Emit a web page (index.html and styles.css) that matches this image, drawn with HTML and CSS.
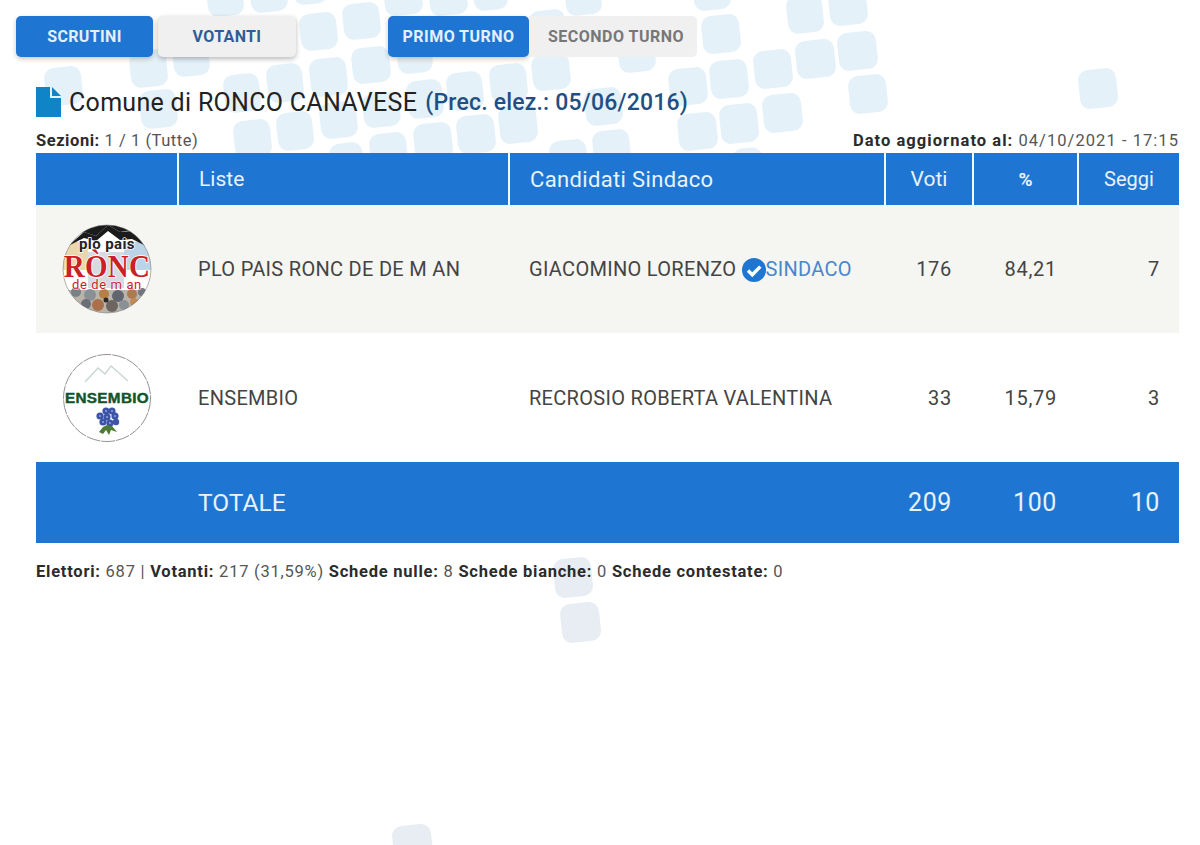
FILE: index.html
```html
<!DOCTYPE html>
<html lang="it">
<head>
<meta charset="utf-8">
<title>Comune di RONCO CANAVESE</title>
<link rel="stylesheet" href="styles.css">
</head>
<body>
<svg class="tiles tiles-blue" width="1200" height="845" viewBox="0 0 1200 845" aria-hidden="true">
  <g class="tile-top">
    <rect x="207" y="-20" width="36" height="36" rx="10" transform="rotate(-6 225 -2)"/>
    <rect x="250" y="-25" width="37" height="37" rx="10" transform="rotate(-6 268 -7)"/>
    <rect x="293" y="-30" width="34" height="34" rx="10" transform="rotate(-6 310 -13)"/>
    <rect x="130" y="50" width="37" height="37" rx="10" transform="rotate(-6 148 68)"/>
    <rect x="173" y="40" width="36" height="36" rx="10" transform="rotate(-6 191 58)"/>
    <rect x="45" y="67" width="37" height="38" rx="10" transform="rotate(-6 63 86)"/>
    <rect x="140" y="90" width="37" height="38" rx="10" transform="rotate(-6 158 109)"/>
    <rect x="224" y="74" width="36" height="38" rx="10" transform="rotate(-6 242 93)"/>
    <rect x="267" y="64" width="36" height="38" rx="10" transform="rotate(-6 285 83)"/>
    <rect x="310" y="58" width="37" height="38" rx="10" transform="rotate(-6 328 77)"/>
    <rect x="234" y="120" width="37" height="38" rx="10" transform="rotate(-6 252 139)"/>
    <rect x="277" y="112" width="36" height="38" rx="10" transform="rotate(-6 295 131)"/>
    <rect x="320" y="102" width="37" height="36" rx="10" transform="rotate(-6 338 120)"/>
    <rect x="300" y="13" width="37" height="37" rx="10" transform="rotate(-6 318 31)"/>
    <rect x="343" y="3" width="37" height="36" rx="10" transform="rotate(-6 361 21)"/>
    <rect x="384" y="-22" width="38" height="37" rx="10" transform="rotate(-6 403 -4)"/>
    <rect x="429" y="-22" width="38" height="37" rx="10" transform="rotate(-6 448 -4)"/>
    <rect x="473" y="-26" width="34" height="36" rx="10" transform="rotate(-6 490 -8)"/>
    <rect x="352" y="47" width="38" height="36" rx="10" transform="rotate(-6 371 65)"/>
    <rect x="397" y="38" width="35" height="35" rx="10" transform="rotate(-6 415 55)"/>
    <rect x="407" y="80" width="36" height="38" rx="10" transform="rotate(-6 425 99)"/>
    <rect x="447" y="72" width="36" height="38" rx="10" transform="rotate(-6 465 91)"/>
    <rect x="490" y="64" width="37" height="38" rx="10" transform="rotate(-6 508 83)"/>
    <rect x="532" y="54" width="38" height="36" rx="10" transform="rotate(-6 551 72)"/>
    <rect x="363" y="93" width="37" height="34" rx="10" transform="rotate(-6 381 110)"/>
    <rect x="414" y="123" width="38" height="37" rx="10" transform="rotate(-6 433 141)"/>
    <rect x="457" y="115" width="38" height="38" rx="10" transform="rotate(-6 476 134)"/>
    <rect x="499" y="105" width="38" height="38" rx="10" transform="rotate(-6 518 124)"/>
    <rect x="370" y="133" width="37" height="37" rx="10" transform="rotate(-6 388 151)"/>
    <rect x="330" y="143" width="33" height="33" rx="10" transform="rotate(-6 346 159)"/>
    <rect x="550" y="140" width="37" height="37" rx="10" transform="rotate(-6 568 158)"/>
    <rect x="565" y="-22" width="36" height="37" rx="10" transform="rotate(-6 583 -4)"/>
    <rect x="530" y="10" width="36" height="37" rx="10" transform="rotate(-6 548 28)"/>
    <rect x="585" y="88" width="37" height="37" rx="10" transform="rotate(-6 603 106)"/>
    <rect x="593" y="130" width="37" height="37" rx="10" transform="rotate(-6 611 148)"/>
    <rect x="693" y="-27" width="37" height="37" rx="10" transform="rotate(-6 711 -9)"/>
    <rect x="702" y="15" width="38" height="38" rx="10" transform="rotate(-6 721 34)"/>
    <rect x="787" y="-5" width="36" height="38" rx="10" transform="rotate(-6 805 14)"/>
    <rect x="829" y="-12" width="38" height="37" rx="10" transform="rotate(-6 848 6)"/>
    <rect x="618" y="34" width="37" height="38" rx="10" transform="rotate(-6 636 53)"/>
    <rect x="669" y="68" width="38" height="37" rx="10" transform="rotate(-6 688 86)"/>
    <rect x="710" y="60" width="38" height="38" rx="10" transform="rotate(-6 729 79)"/>
    <rect x="754" y="50" width="38" height="38" rx="10" transform="rotate(-6 773 69)"/>
    <rect x="796" y="40" width="39" height="38" rx="10" transform="rotate(-6 815 59)"/>
    <rect x="838" y="32" width="39" height="38" rx="10" transform="rotate(-6 857 51)"/>
    <rect x="849" y="75" width="38" height="38" rx="10" transform="rotate(-6 868 94)"/>
    <rect x="678" y="113" width="39" height="37" rx="10" transform="rotate(-6 697 131)"/>
    <rect x="720" y="104" width="38" height="39" rx="10" transform="rotate(-6 739 123)"/>
    <rect x="763" y="94" width="39" height="38" rx="10" transform="rotate(-6 782 113)"/>
    <rect x="733" y="148" width="30" height="30" rx="10" transform="rotate(-6 748 163)"/>
    <rect x="1079" y="69" width="38" height="39" rx="10" transform="rotate(-6 1098 88)"/>
  </g>
  <g class="tile-low">
    <rect x="554" y="558" width="38" height="39" rx="10" transform="rotate(-6 573 577)"/>
    <rect x="561" y="603" width="39" height="39" rx="10" transform="rotate(-6 580 622)"/>
    <rect x="393" y="825" width="39" height="39" rx="10" transform="rotate(-6 412 844)"/>
  </g>
</svg>

<main class="page">
  <nav class="toolbar">
    <div class="btn-group">
      <a class="btn btn-on btn-main">SCRUTINI</a>
      <a class="btn btn-off btn-main">VOTANTI</a>
    </div>
    <div class="btn-group turni">
      <a class="btn btn-on btn-turn">PRIMO TURNO</a>
      <a class="btn btn-mute">SECONDO TURNO</a>
    </div>
  </nav>

  <h1 class="title">
    <svg class="file-icon" width="25" height="30" viewBox="0 0 25 30" aria-hidden="true">
      <path d="M0 0H14V11H25V30H0Z"/>
      <path d="M16 0L25 9H16Z"/>
    </svg>
    <span class="comune">Comune di RONCO CANAVESE</span>
    <span class="prec">(Prec. elez.: 05/06/2016)</span>
  </h1>

  <div class="meta">
    <span><b>Sezioni:</b> 1 / 1 (Tutte)</span>
    <span class="dato"><b>Dato aggiornato al:</b> 04/10/2021 - 17:15</span>
  </div>

  <table class="results">
    <colgroup>
      <col class="c-logo"><col class="c-list"><col class="c-cand"><col class="c-voti"><col class="c-perc"><col class="c-seggi">
    </colgroup>
    <thead>
      <tr>
        <th></th>
        <th class="left">Liste</th>
        <th class="left th-cand">Candidati Sindaco</th>
        <th>Voti</th>
        <th class="th-perc">%</th>
        <th class="th-seggi">Seggi</th>
      </tr>
    </thead>
    <tbody>
      <tr class="row-a">
        <td class="logo">
          <svg width="90" height="90" viewBox="0 0 90 90" role="img" aria-label="Plo pais Rònc de de m an">
            <defs><clipPath id="clip1"><circle cx="45" cy="45" r="44"/></clipPath></defs>
            <g clip-path="url(#clip1)">
              <rect width="90" height="90" fill="#fff"/>
              <rect x="0" y="18" width="26" height="28" fill="#ecd6ae"/>
              <rect x="62" y="18" width="28" height="28" fill="#bcd4e8"/>
              <rect x="26" y="28" width="36" height="36" fill="#d5dbe3"/>
              <path d="M6 22L22 8L34 12L46 1L58 8L70 7L88 24L70 15L58 16L46 7L34 17L22 14Z" fill="#1b1b1b"/>
              <path d="M0 18L22 2L44 -2L70 0L90 20L70 6L58 8L46 1L34 12L22 8Z" fill="#1b1b1b"/>
              <rect x="0" y="66" width="90" height="24" fill="#b9b3aa"/>
              <circle cx="14" cy="68" r="5" fill="#7a7f88"/><circle cx="28" cy="71" r="6" fill="#8b8f96"/><circle cx="42" cy="70" r="5" fill="#b57f45"/>
              <circle cx="56" cy="72" r="6" fill="#5f6670"/><circle cx="70" cy="70" r="5" fill="#a87c50"/><circle cx="80" cy="68" r="4" fill="#707580"/>
              <circle cx="24" cy="80" r="5" fill="#6b6f78"/><circle cx="36" cy="81" r="6" fill="#a9704a"/><circle cx="50" cy="82" r="6" fill="#6d6660"/>
              <circle cx="62" cy="81" r="5" fill="#8b8f97"/><circle cx="72" cy="78" r="4" fill="#c28a52"/>
              <circle cx="44" cy="76" r="2.5" fill="#2b2723"/>
            </g>
            <circle cx="45" cy="45" r="44" fill="none" stroke="#666" stroke-width=".5"/>
            <text class="l1-a" x="45" y="25" text-anchor="middle">plo pais</text>
            <text class="l1-b" text-anchor="middle" transform="translate(45 53) scale(1 1.12)">RÒNC</text>
            <text class="l1-c" x="45" y="65" text-anchor="middle">de de m an</text>
          </svg>
        </td>
        <td>PLO PAIS RONC DE DE M AN</td>
        <td class="cand">GIACOMINO LORENZO
          <svg class="check" width="24" height="24" viewBox="0 0 24 24" aria-hidden="true">
            <circle cx="12" cy="12" r="12"/>
            <path d="M6 12.5L10.3 16.8L18.3 8.6"/>
          </svg><span class="sindaco">SINDACO</span></td>
        <td class="num">176</td>
        <td class="num">84,21</td>
        <td class="num">7</td>
      </tr>
      <tr class="row-b">
        <td class="logo">
          <svg width="90" height="90" viewBox="0 0 90 90" role="img" aria-label="Ensembio">
            <circle cx="45" cy="45" r="43.5" fill="#fff" stroke="#777" stroke-width=".8" stroke-dasharray="14 1"/>
            <path d="M23 29L36 15L43 21L49 13L66 28" fill="none" stroke="#c8d6d2" stroke-width="1.3"/>
            <text class="l2-a" x="45" y="50" text-anchor="middle" textLength="84" lengthAdjust="spacingAndGlyphs">ENSEMBIO</text>
            <g fill="#3c53a6">
              <circle cx="38" cy="63" r="3.6"/><circle cx="44" cy="58" r="3.6"/><circle cx="50" cy="58" r="3.6"/><circle cx="53" cy="63" r="3.6"/>
              <circle cx="45" cy="64" r="3.6"/><circle cx="41" cy="69" r="3.6"/><circle cx="48" cy="70" r="3.6"/><circle cx="54" cy="69" r="3.2"/>
            </g>
            <g fill="#8ea2dc">
              <circle cx="38" cy="63" r="1"/><circle cx="44" cy="58" r="1"/><circle cx="50" cy="58" r="1"/><circle cx="53" cy="63" r="1"/>
              <circle cx="45" cy="64" r="1"/><circle cx="41" cy="69" r="1"/><circle cx="48" cy="70" r="1"/>
            </g>
            <path d="M37 79L41 74L45 72L50 73L55 79L49 77L47 82L44 77L41 81Z" fill="#4d7a36"/>
          </svg>
        </td>
        <td>ENSEMBIO</td>
        <td>RECROSIO ROBERTA VALENTINA</td>
        <td class="num">33</td>
        <td class="num">15,79</td>
        <td class="num">3</td>
      </tr>
    </tbody>
    <tfoot>
      <tr>
        <td></td>
        <td colspan="2" class="totale">TOTALE</td>
        <td class="num">209</td>
        <td class="num">100</td>
        <td class="num">10</td>
      </tr>
    </tfoot>
  </table>

  <p class="stats"><b>Elettori:</b> 687 | <b>Votanti:</b> 217 (31,59%) <b>Schede nulle:</b> 8 <b>Schede bianche:</b> 0 <b>Schede contestate:</b> 0</p>
</main>
</body>
</html>
```

FILE: styles.css
```css
* { box-sizing: border-box; }
html, body { margin: 0; height: 100%; }
body {
  position: relative;
  height: 845px;
  overflow: hidden;
  background: #fff;
  font-family: Roboto, "Liberation Sans", sans-serif;
  color: #444;
}
.tiles { position: absolute; left: 0; top: 0; }
.tile-top { fill: #e4f1f9; }
.tile-low { fill: #e7edf2; }
.page { position: relative; padding: 16px 21px 0 0; }

.toolbar { display: flex; padding-left: 16px; }
.btn-group { display: flex; }
.turni { margin-left: 92px; }
.btn {
  display: flex;
  align-items: center;
  justify-content: center;
  height: 41px;
  border-radius: 5px;
  font-size: 16px;
  font-weight: 700;
  letter-spacing: .35px;
}
.btn-main { width: 137px; }
.btn-off { margin-left: 5px; width: 138px; }
.btn-on { background: #1f76d2; color: #e3effa; box-shadow: 0 2px 5px rgba(0,0,0,.22); }
.btn-off { background: #f0f0f0; color: #2f5c97; box-shadow: 0 2px 5px rgba(0,0,0,.28); }
.btn-turn { width: 141px; letter-spacing: .45px; }
.btn-mute {
  width: 168px;
  padding-left: 6px;
  background: #f0f0f0;
  color: #777;
  border-radius: 0 5px 5px 0;
  letter-spacing: .5px;
}

.title {
  display: flex;
  align-items: center;
  margin: 30px 0 0 36px;
  height: 30px;
  font-size: 25px;
  font-weight: 400;
  color: #222;
}
.comune { letter-spacing: .3px; }
.file-icon { fill: #0f84c6; margin-right: 8px; flex: none; }
.prec { margin-left: 8px; font-size: 23px; font-weight: 500; letter-spacing: .2px; color: #1f4f84; }

.meta {
  display: flex;
  justify-content: space-between;
  align-items: center;
  height: 20px;
  margin: 13px 0 0 36px;
  font-size: 16.5px;
  letter-spacing: .55px;
  color: #555;
}
.dato { letter-spacing: 1.05px; }
.meta b, .stats b { color: #2b2b2b; font-weight: 700; }

.results {
  width: 1143px;
  margin: 3px 0 0 36px;
  border-collapse: collapse;
  table-layout: fixed;
}
.c-logo { width: 142px; }
.c-list { width: 331px; }
.c-cand { width: 376px; }
.c-voti { width: 88px; }
.c-perc { width: 105px; }
.c-seggi { width: 101px; }

.results th {
  height: 52px;
  padding: 0;
  background: #1f76d2;
  border-left: 2px solid #f2f8fc;
  color: #e8f2fb;
  font-size: 21px;
  font-weight: 400;
  text-align: center;
}
.results th:first-child { border-left: 0; }
.results th.left { text-align: left; padding-left: 20px; }
.results th.th-cand { font-size: 22px; letter-spacing: .35px; }
.results th.th-perc { font-size: 19px; font-weight: 700; }
.results th.th-seggi { font-size: 20px; }

.results td {
  padding: 0 0 0 20px;
  font-size: 20px;
  font-weight: 400;
  letter-spacing: .3px;
  color: #444;
  vertical-align: middle;
}
.results td.num { padding: 0 21px 0 0; text-align: right; letter-spacing: .7px; }
.results td.num:last-child { padding-right: 19px; }
.row-a td { height: 128px; background: #f5f5f1; }
.row-b td { height: 129px; background: #fff; }
.results td.logo { padding: 0; text-align: center; }
.logo svg { display: block; margin: 0 auto; }

.results tfoot td {
  height: 81px;
  background: #1f76d2;
  color: #e8f2fb;
  font-size: 25px;
}
.results tfoot td.totale { font-size: 24.5px; letter-spacing: 0; }
.results tfoot td.num { letter-spacing: .6px; }
.check { vertical-align: -6px; }
.check circle { fill: #1f76d2; }
.check path { fill: none; stroke: #fff; stroke-width: 3.4; }
.sindaco { color: #4a86cc; }

.l1-a { font: 700 15px Roboto, sans-serif; letter-spacing: .4px; fill: #222; paint-order: stroke; stroke: #fff; stroke-width: 1.5px; }
.l1-b { font: 700 29px "Liberation Serif", serif; fill: #cc2027; paint-order: stroke; stroke: #fff; stroke-width: 1.5px; }
.l1-c { font: 400 13px Roboto, sans-serif; letter-spacing: .6px; fill: #cc2027; paint-order: stroke; stroke: #fff; stroke-width: 1px; }
.l2-a { font: 700 14px "Liberation Sans", sans-serif; fill: #14532d; stroke: #14532d; stroke-width: .4px; }

.stats {
  margin: 19px 0 0 36px;
  font-size: 16.5px;
  letter-spacing: .76px;
  line-height: 20px;
  color: #555;
}
```
